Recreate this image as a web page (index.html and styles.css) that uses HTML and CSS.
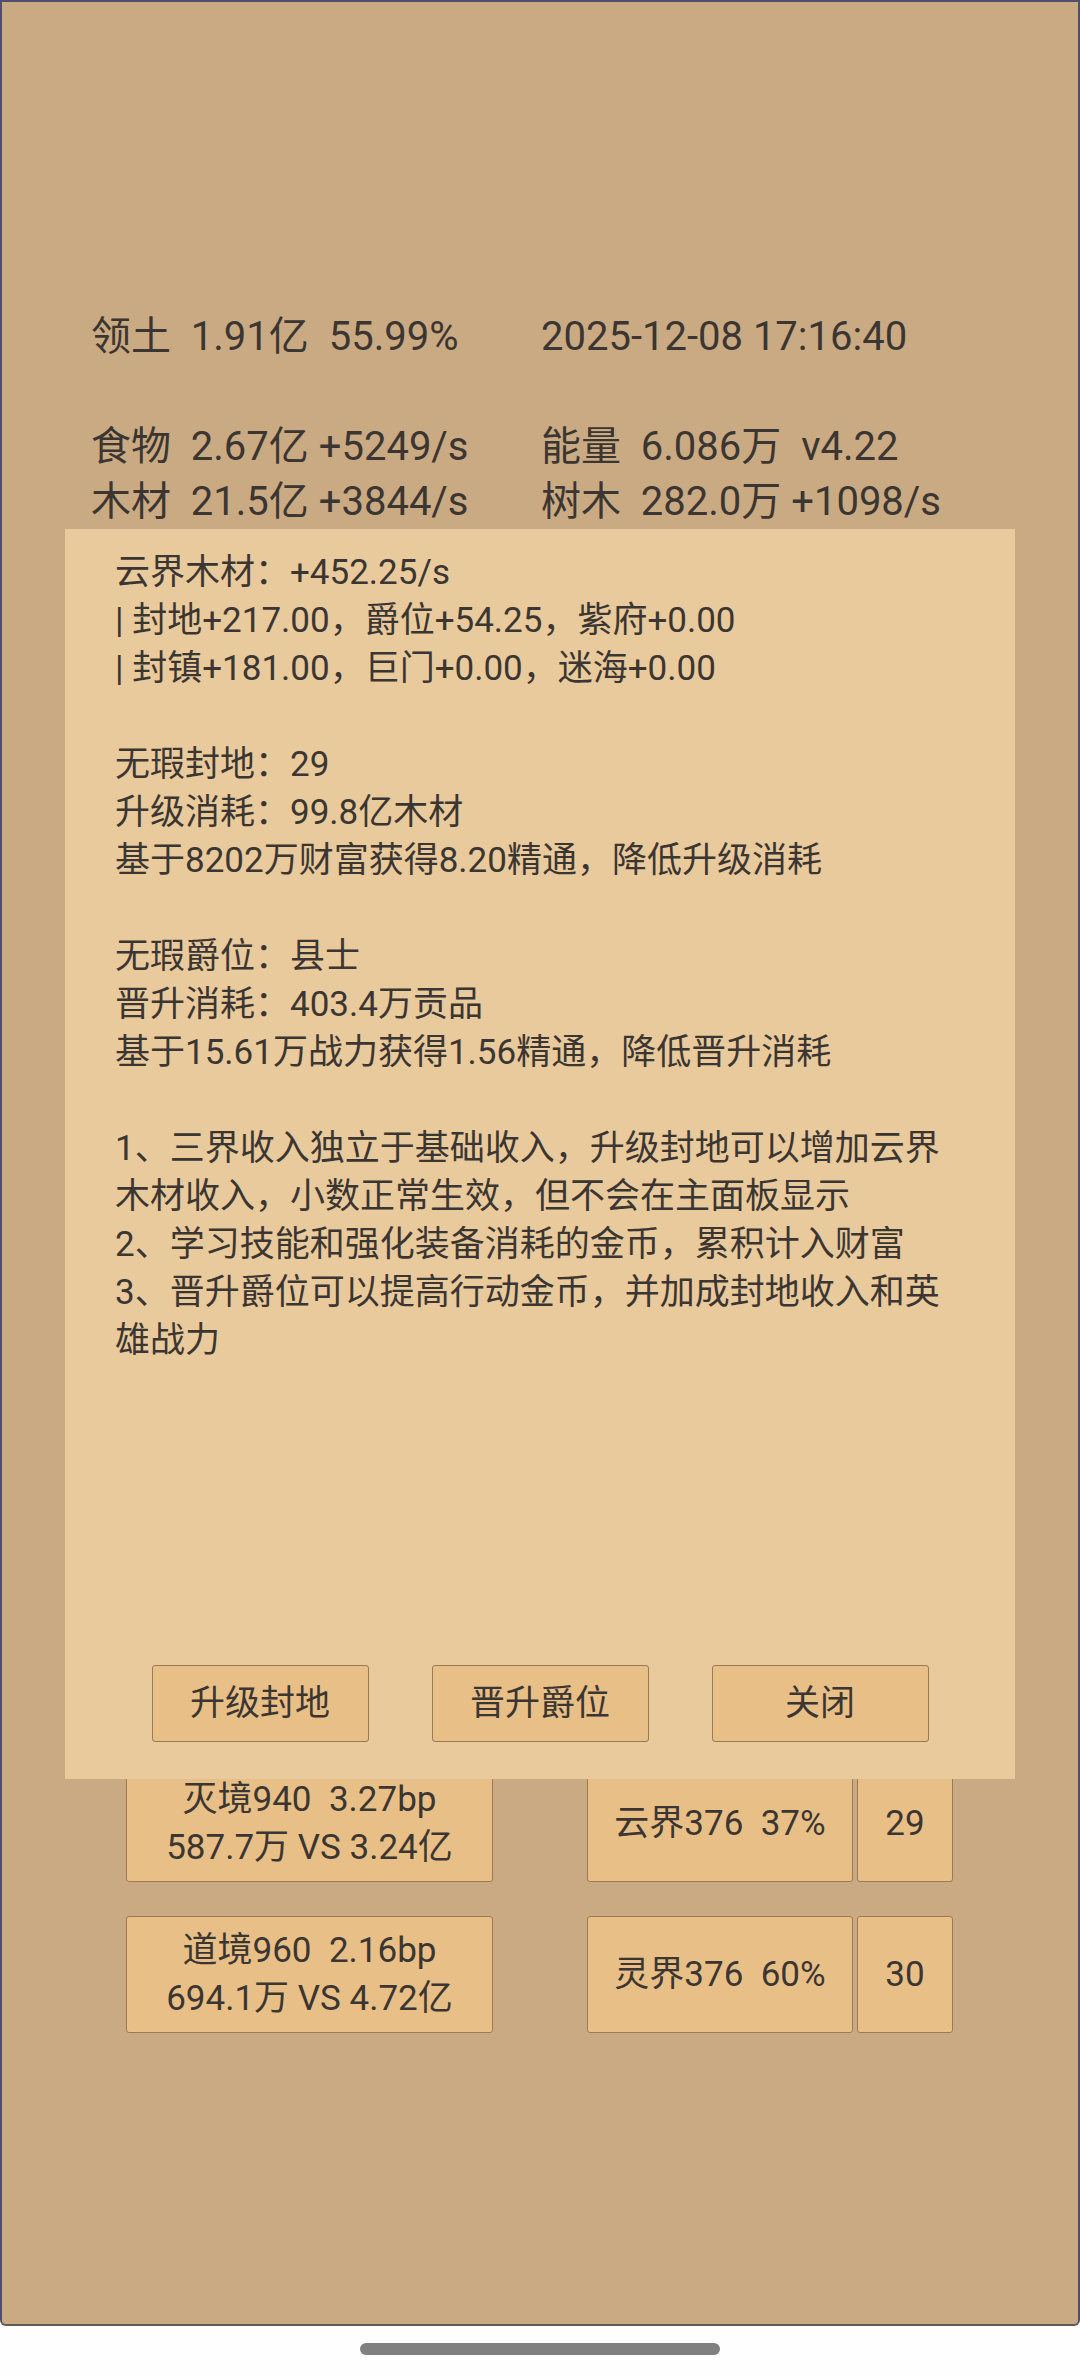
FILE: index.html
```html
<!DOCTYPE html>
<html>
	<head>
		<meta charset="utf-8" />
		<title>领土</title>
		<link rel="stylesheet" href="styles.css">
	</head>
	<body>
		<div id="screen">
			<div class="stats">
				<div class="stat_row"><span>领土  1.91亿  55.99%</span><span>2025-12-08 17:16:40</span></div>
				<div class="stat_row"></div>
				<div class="stat_row"><span>食物  2.67亿 +5249/s</span><span>能量  6.086万  v4.22</span></div>
				<div class="stat_row"><span>木材  21.5亿 +3844/s</span><span>树木  282.0万 +1098/s</span></div>
			</div>
			<div class="realms">
				<div class="realm_row">
					<div class="card boss">灭境940  3.27bp<br>587.7万 VS 3.24亿</div>
					<div class="card world">云界376  37%</div>
					<div class="card lv">29</div>
				</div>
				<div class="realm_row">
					<div class="card boss">道境960  2.16bp<br>694.1万 VS 4.72亿</div>
					<div class="card world">灵界376  60%</div>
					<div class="card lv">30</div>
				</div>
			</div>
			<!--封地弹窗-->
			<div class="panel">
				<div class="panel_text">
					<p>云界木材：+452.25/s</p>
					<p>| 封地+217.00，爵位+54.25，紫府+0.00</p>
					<p>| 封镇+181.00，巨门+0.00，迷海+0.00</p>
					<p class="gap"></p>
					<p>无瑕封地：29</p>
					<p>升级消耗：99.8亿木材</p>
					<p>基于8202万财富获得8.20精通，降低升级消耗</p>
					<p class="gap"></p>
					<p>无瑕爵位：县士</p>
					<p>晋升消耗：403.4万贡品</p>
					<p>基于15.61万战力获得1.56精通，降低晋升消耗</p>
					<p class="gap"></p>
					<p>1、三界收入独立于基础收入，升级封地可以增加云界木材收入，小数正常生效，但不会在主面板显示</p>
					<p>2、学习技能和强化装备消耗的金币，累积计入财富</p>
					<p>3、晋升爵位可以提高行动金币，并加成封地收入和英雄战力</p>
				</div>
				<div class="panel_btns">
					<button class="btn">升级封地</button>
					<button class="btn">晋升爵位</button>
					<button class="btn">关闭</button>
				</div>
			</div>
		</div>
		<div class="home_bar"></div>
	</body>
</html>
```

FILE: styles.css
```css
*{
	margin:0;
	padding:0;
	box-sizing: border-box;
}
body{
	background: #fefefe;
	color: #3b3632;
	font-family: Roboto, "Noto Sans CJK SC", sans-serif;
}
#screen{
	position: relative;
	width: 1080px;
	height: 2326px;
	background: #caaa82;
	border: 2px solid #50506a;
	border-bottom-color: #5e5a55;
	border-radius: 0 0 6px 6px;
}
.stats{
	padding: 307px 0 0 89px;
	font-size: 40px;
	line-height: 55px;
}
	.stat_row{
		display: grid;
		grid-template-columns: 450px auto;
		height: 55px;
		white-space: pre;
	}
.realms{
	margin-top: 1236px;
	padding-left: 124px;
	display: flex;
	flex-direction: column;
	gap: 34px;
	font-size: 35px;
	line-height: 48px;
}
	.realm_row{
		display: flex;
		height: 117px;
	}
	.card{
		display: flex;
		align-items: center;
		justify-content: center;
		text-align: center;
		white-space: pre;
		background: #e8c087;
		border: 1px solid #9a7b55;
		border-radius: 3px;
	}
	.boss{width: 367px;margin-right: 94px;}
	.world{width: 266px;margin-right: 4px;}
	.lv{width: 96px;}
.panel{
	position: absolute;
	left: 63px;
	top: 527px;
	width: 950px;
	height: 1250px;
	padding: 20px 55px 37px 50px;
	background: #e9ca9c;
	display: flex;
	flex-direction: column;
	justify-content: space-between;
	font-size: 35px;
	line-height: 48px;
}
	.panel_text p{min-height: 48px;}
	.panel_btns{
		display: flex;
		justify-content: center;
		gap: 63px;
		margin: 0 -55px 0 -50px;
	}
	.btn{
		width: 217px;
		height: 77px;
		font: inherit;
		color: inherit;
		background: #e8bf86;
		border: 1px solid #9a7b55;
		border-radius: 3px;
	}
.home_bar{
	width: 360px;
	height: 12px;
	margin: 17px auto 0;
	background: #808080;
	border-radius: 6px;
}
```
